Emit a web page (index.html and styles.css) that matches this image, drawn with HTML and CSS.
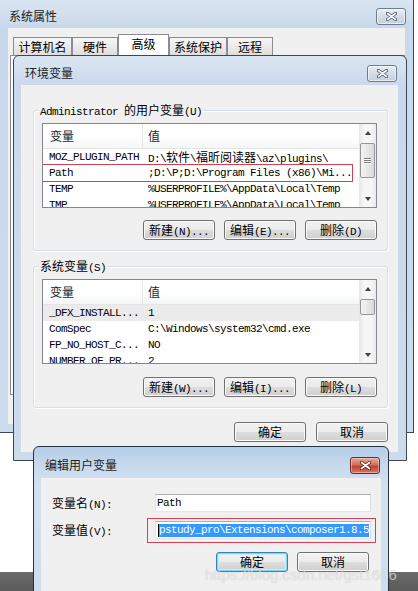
FILE: index.html
```html
<!DOCTYPE html>
<html lang="zh-CN">
<head>
<meta charset="UTF-8">
<meta name="viewport" content="width=device-width, initial-scale=1.0">
<link rel="stylesheet" href="styles.css">
<title>环境变量</title>
</head>
<body>
  <!-- back window: system properties -->
  <div class="win sys">
    <div class="titlebar">
      <span class="title">系统属性</span>
      <span class="close">
        <svg width="11" height="9" viewBox="0 0 11 9"><path d="M1.5 1.5l8 6M9.5 1.5l-8 6" stroke="#4a5566" stroke-width="3.4" stroke-linecap="round"/><path d="M1.5 1.5l8 6M9.5 1.5l-8 6" stroke="#fff" stroke-width="1.6" stroke-linecap="round"/></svg>
      </span>
    </div>
    <div class="client">
      <div class="tabs">
        <span class="tab w1">计算机名</span>
        <span class="tab w2">硬件</span>
        <span class="tab w3 on">高级</span>
        <span class="tab w4">系统保护</span>
        <span class="tab w2">远程</span>
      </div>
      <div class="page"></div>
    </div>
  </div>

  <!-- environment variables -->
  <div class="win env">
    <div class="titlebar">
      <span class="title">环境变量</span>
      <span class="close">
        <svg width="11" height="9" viewBox="0 0 11 9"><path d="M1.5 1.5l8 6M9.5 1.5l-8 6" stroke="#4a5566" stroke-width="3.4" stroke-linecap="round"/><path d="M1.5 1.5l8 6M9.5 1.5l-8 6" stroke="#fff" stroke-width="1.6" stroke-linecap="round"/></svg>
      </span>
    </div>
    <div class="client">
      <div class="group g1">
        <div class="legend">Administrator <span class="cj">的用户变量</span>(U)</div>
        <div class="list">
          <div class="grid">
            <div class="head"><span class="c1">变量</span><span class="c2">值</span></div>
            <div class="row"><span class="c1">MOZ_PLUGIN_PATH</span><span class="c2">D:\<span class="cj">软件</span>\<span class="cj">福昕阅读器</span>\az\plugins\</span></div>
            <div class="row mark"><span class="c1">Path</span><span class="c2">;D:\P;D:\Program Files (x86)\Mi...</span></div>
            <div class="row"><span class="c1">TEMP</span><span class="c2">%USERPROFILE%\AppData\Local\Temp</span></div>
            <div class="row"><span class="c1">TMP</span><span class="c2">%USERPROFILE%\AppData\Local\Temp</span></div>
          </div>
          <div class="scroll">
            <span class="arrow up"></span>
            <span class="track"><span class="thumb big"><i></i><i></i><i></i></span></span>
            <span class="arrow down"></span>
          </div>
        </div>
        <div class="btns">
          <span class="btn"><span class="cj">新建</span>(N)...</span>
          <span class="btn"><span class="cj">编辑</span>(E)...</span>
          <span class="btn"><span class="cj">删除</span>(D)</span>
        </div>
      </div>

      <div class="group g2">
        <div class="legend"><span class="cj">系统变量</span>(S)</div>
        <div class="list">
          <div class="grid">
            <div class="head"><span class="c1">变量</span><span class="c2">值</span></div>
            <div class="row sel"><span class="c1">_DFX_INSTALL...</span><span class="c2">1</span></div>
            <div class="row"><span class="c1">ComSpec</span><span class="c2">C:\Windows\system32\cmd.exe</span></div>
            <div class="row"><span class="c1">FP_NO_HOST_C...</span><span class="c2">NO</span></div>
            <div class="row"><span class="c1">NUMBER_OF_PR...</span><span class="c2">2</span></div>
          </div>
          <div class="scroll">
            <span class="arrow up"></span>
            <span class="track"><span class="thumb small"></span></span>
            <span class="arrow down"></span>
          </div>
        </div>
        <div class="btns">
          <span class="btn"><span class="cj">新建</span>(W)...</span>
          <span class="btn"><span class="cj">编辑</span>(I)...</span>
          <span class="btn"><span class="cj">删除</span>(L)</span>
        </div>
      </div>

      <div class="btns bottom">
        <span class="btn cj">确定</span>
        <span class="btn cj">取消</span>
      </div>
    </div>
  </div>

  <div class="band"></div>

  <!-- edit user variable -->
  <div class="win edit">
    <div class="titlebar">
      <span class="title">编辑用户变量</span>
      <span class="close red">
        <svg width="11" height="9" viewBox="0 0 11 9"><path d="M1.5 1.5l8 6M9.5 1.5l-8 6" stroke="#5a1e16" stroke-width="3.4" stroke-linecap="round"/><path d="M1.5 1.5l8 6M9.5 1.5l-8 6" stroke="#fff" stroke-width="1.7" stroke-linecap="round"/></svg>
      </span>
    </div>
    <div class="client">
      <div class="form">
        <span class="lbl"><span class="cj">变量名</span>(N):</span>
        <span class="input">Path</span>
        <span class="lbl"><span class="cj">变量值</span>(V):</span>
        <span class="input mark"><span class="caret"></span><span class="hl">pstudy_pro\Extensions\composer1.8.5</span></span>
      </div>
      <div class="btns">
        <span class="btn def cj">确定</span>
        <span class="btn cj">取消</span>
      </div>
    </div>
  </div>

  <div class="watermark">https://blog.csdn.net/gst1666</div>
</body>
</html>
```

FILE: styles.css
```css
* {
  box-sizing: border-box;
}
body {
  margin: 0;
  width: 418px;
  height: 591px;
  overflow: hidden;
  position: relative;
  background: #fff;
  font-family: "Liberation Mono", "Noto Sans CJK SC", monospace;
  font-size: 11px;
  letter-spacing: -0.6px;
  color: #000;
}
.cj,
.title,
.tab,
.head {
  font-family: "Noto Sans CJK SC", sans-serif;
  font-size: 12px;
  letter-spacing: 0;
}

/* window frames */
.win {
  position: absolute;
  display: flex;
  flex-direction: column;
  border: 1px solid #3e4651;
  background: linear-gradient(#dbe6f2, #c9d9eb 30px, #cddcec);
}
.titlebar {
  display: flex;
  justify-content: space-between;
  align-items: flex-start;
  flex-shrink: 0;
}
.title {
  line-height: 14px;
  color: #222;
}
.close {
  width: 30px;
  height: 17px;
  border: 1px solid #6d7c8f;
  border-radius: 3px;
  background: linear-gradient(#e9eef4, #d3dce7 50%, #c6d1de);
  box-shadow: inset 0 0 0 1px rgba(255, 255, 255, 0.6);
  display: flex;
  align-items: center;
  justify-content: center;
}
.close.red {
  border-color: #6b2a22;
  background: linear-gradient(#e7a89a, #d2705f 45%, #c0402c 55%, #d2786a);
  box-shadow: inset 0 0 0 1px rgba(255, 220, 210, 0.5);
}
.client {
  flex: 1;
  background: #f0f0f0;
}

/* system properties */
.sys {
  left: -1px;
  top: -4px;
  width: 415px;
  height: 437px;
  padding: 0 8px 8px 8px;
}
.sys .titlebar {
  height: 31px;
}
.sys .title {
  margin: 12px 0 0 1px;
}
.sys .close {
  margin: 11px -1px 0 0;
}
.sys .client {
  display: flex;
  flex-direction: column;
}
.tabs {
  display: flex;
  align-items: flex-end;
  height: 21px;
  margin-top: 6px;
  padding-left: 5px;
}
.tab {
  height: 18px;
  border: 1px solid #898c95;
  border-bottom: none;
  background: linear-gradient(#f6f6f6, #ebebeb 50%, #dedede);
  text-align: center;
  line-height: 17px;
}
.tab.on {
  height: 21px;
  background: #fff;
  line-height: 17px;
}
.w1 { width: 59px; }
.w2 { width: 46px; }
.w3 { width: 51px; }
.w4 { width: 58px; }
.page {
  flex: 1;
  margin: 0 0 29px 2px;
  border: 1px solid #898c95;
  background: #fcfcfc;
}

/* environment variables */
.env {
  left: 13px;
  top: 55px;
  width: 394px;
  height: 406px;
  padding: 0 8px 8px 7px;
  border-radius: 6px 6px 0 0;
}
.env .titlebar {
  height: 29px;
}
.env .title {
  margin: 10px 0 0 4px;
}
.env .close {
  margin: 9px 1px 0 0;
}
.env .client {
  padding: 0 10px 0 12px;
}
.group {
  border: 1px solid #d5dfe5;
  border-radius: 3px;
  box-shadow: inset 1px 1px 0 #fff, 1px 1px 0 #fff;
  padding: 0 10px 10px 8px;
}
.g1 {
  margin-top: 25px;
}
.g2 {
  margin-top: 15px;
}
.legend {
  width: fit-content;
  height: 14px;
  line-height: 14px;
  margin: -8px 0 0 -3px;
  padding: 0 1px;
  background: #f0f0f0;
}
.list {
  display: flex;
  height: 85px;
  margin-top: 6px;
  border: 1px solid #828790;
  background: #fff;
  overflow: hidden;
}
.grid {
  flex: 1;
  overflow: hidden;
}
.head {
  display: flex;
  height: 25px;
  line-height: 24px;
  border-bottom: 1px solid #e5e5e5;
  background: linear-gradient(#fff 55%, #f4f5f7);
  color: #1e1e1e;
}
.head .c1 {
  border-right: 1px solid #e5e5e5;
  padding-left: 7px;
}
.row {
  display: flex;
  height: 16px;
  line-height: 16px;
  white-space: nowrap;
  position: relative;
}
.c1 {
  width: 100px;
  flex-shrink: 0;
  padding-left: 6px;
}
.c2 {
  padding-left: 5px;
}
.row.sel {
  background: #ebebeb;
}
.row.mark::after {
  content: "";
  position: absolute;
  left: -4px;
  right: 6px;
  top: -1px;
  bottom: -1px;
  border: 1px solid #d43f51;
}
.scroll {
  width: 17px;
  display: flex;
  flex-direction: column;
  background: linear-gradient(90deg, #e6e6e6, #f6f6f6 30%, #f6f6f6 70%, #e9e9e9);
}
.arrow {
  height: 17px;
  display: flex;
  align-items: center;
  justify-content: center;
}
.arrow::before {
  content: "";
  border-left: 3.5px solid transparent;
  border-right: 3.5px solid transparent;
}
.arrow.up::before {
  border-bottom: 4px solid #404040;
}
.arrow.down::before {
  border-top: 4px solid #404040;
}
.track {
  flex: 1;
}
.thumb {
  display: flex;
  flex-direction: column;
  align-items: center;
  justify-content: center;
  gap: 1px;
  margin: 2px 1px 0;
  border: 1px solid #979797;
  border-radius: 2px;
  background: linear-gradient(90deg, #f4f4f4, #e4e4e4 60%, #d9d9d9);
}
.thumb.big {
  height: 35px;
}
.thumb.small {
  height: 16px;
}
.thumb i {
  width: 7px;
  height: 1px;
  background: #7a7a7a;
  box-shadow: 0 1px 0 #fff;
}
.btns {
  display: flex;
  justify-content: flex-end;
  gap: 9px;
  margin-top: 12px;
}
.g2 .btns {
  margin-top: 13px;
}
.btns.bottom {
  gap: 10px;
  margin-top: 14px;
}
.btn {
  width: 72px;
  height: 20px;
  border: 1px solid #707070;
  border-radius: 3px;
  background: linear-gradient(#f2f2f2, #ebebeb 50%, #dddddd 50%, #cfcfcf);
  box-shadow: inset 0 0 0 1px #fbfbfb;
  text-align: center;
  line-height: 18px;
  white-space: nowrap;
}
.btn.def {
  border-color: #3c7fb1;
  box-shadow: inset 0 0 0 1px #7fd6f8, inset 0 0 0 2px #c7ecfb;
}

/* edit user variable */
.band {
  position: absolute;
  left: 0;
  right: 0;
  bottom: 0;
  height: 19px;
  background: linear-gradient(#6b6b6b, #5a5a5a);
}
.edit {
  left: 33px;
  top: 446px;
  width: 356px;
  height: 160px;
  padding: 0 7px;
  border-color: #26313c;
  border-radius: 6px 6px 0 0;
  background: linear-gradient(#b5cde8, #cadbee 22px, #d2e1f1 40px, #cfdeef);
}
.edit .titlebar {
  height: 31px;
}
.edit .title {
  margin: 11px 0 0 4px;
}
.edit .close {
  margin: 10px 1px 0 0;
}
.edit .client {
  padding: 16px 12px 0 11px;
}
.form {
  display: grid;
  grid-template-columns: 103px 216px;
  grid-auto-rows: 18px;
  row-gap: 9px;
}
.lbl {
  line-height: 18px;
}
.input {
  position: relative;
  display: flex;
  align-items: center;
  border: 1px solid;
  border-color: #abadb3 #dbdfe6 #e3e9ef #e2e3ea;
  background: #fff;
  padding-left: 1px;
  white-space: nowrap;
  overflow: visible;
}
.input.mark::after {
  content: "";
  position: absolute;
  left: -9px;
  right: -6px;
  top: -4px;
  bottom: -5px;
  border: 1px solid #d43f51;
}
.caret {
  width: 1px;
  height: 13px;
  margin-left: 1px;
  background: #000;
}
.hl {
  line-height: 13px;
  background: #3399ff;
  color: #fff;
}
.edit .btns {
  margin-top: 13px;
}

.watermark {
  position: absolute;
  left: 205px;
  top: 566px;
  font-family: "Liberation Sans", Arial, sans-serif;
  font-size: 15px;
  letter-spacing: 0;
  color: rgba(255, 255, 255, 0.55);
  text-shadow: 0 0 1px rgba(120, 120, 120, 0.4);
  white-space: nowrap;
}
```
